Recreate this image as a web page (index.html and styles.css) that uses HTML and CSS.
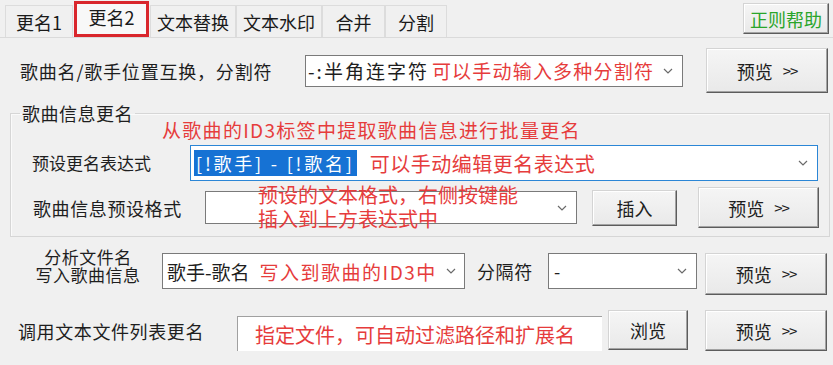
FILE: index.html
```html
<!DOCTYPE html>
<html lang="zh-CN">
<head>
<meta charset="utf-8">
<title>更名2</title>
<link rel="stylesheet" href="styles.css">
</head>
<body>
<div class="tabs">
  <div class="tab t1">更名1</div>
  <div class="tab t2 active">更名2</div>
  <div class="tab t3">文本替换</div>
  <div class="tab t4">文本水印</div>
  <div class="tab t5">合并</div>
  <div class="tab t6">分割</div>
  <div class="btn help-btn">正则帮助</div>
</div>

<div class="row r1">
  <div class="label l1">歌曲名/歌手位置互换，分割符</div>
  <div class="combo c1">
    <span class="val v1">-:半角连字符</span><span class="note n1">可以手动输入多种分割符</span>
    <span class="arrow"><svg width="10" height="6" viewBox="0 0 10 6"><polyline points="1,1 5,5 9,1" fill="none" stroke="#6a6a6a" stroke-width="1.2"/></svg></span>
  </div>
  <div class="btn preview">预览<span class="gt">&gt;&gt;</span></div>
</div>

<fieldset class="group">
  <legend>歌曲信息更名</legend>
  <div class="note group-note">从歌曲的ID3标签中提取歌曲信息进行批量更名</div>
  <div class="row r2">
    <div class="label l2">预设更名表达式</div>
    <div class="combo c2">
      <span class="sel">[!歌手] - [!歌名]</span><span class="note n2">可以手动编辑更名表达式</span>
      <span class="arrow"><svg width="10" height="6" viewBox="0 0 10 6"><polyline points="1,1 5,5 9,1" fill="none" stroke="#6a6a6a" stroke-width="1.2"/></svg></span>
    </div>
  </div>
  <div class="row r3">
    <div class="label l3">歌曲信息预设格式</div>
    <div class="combo c3">
      <span class="arrow"><svg width="10" height="6" viewBox="0 0 10 6"><polyline points="1,1 5,5 9,1" fill="none" stroke="#6a6a6a" stroke-width="1.2"/></svg></span>
      <div class="note overlay-note">预设的文本格式，右侧按键能<br>插入到上方表达式中</div>
    </div>
    <div class="btn insert">插入</div>
    <div class="btn preview p3">预览<span class="gt">&gt;&gt;</span></div>
  </div>
</fieldset>

<div class="row r4">
  <div class="label l4">分析文件名<br>写入歌曲信息</div>
  <div class="combo c4">
    <span class="val v4">歌手-歌名</span><span class="note n4">写入到歌曲的ID3中</span>
    <span class="arrow"><svg width="10" height="6" viewBox="0 0 10 6"><polyline points="1,1 5,5 9,1" fill="none" stroke="#6a6a6a" stroke-width="1.2"/></svg></span>
  </div>
  <div class="label l4b">分隔符</div>
  <div class="combo c5">
    <span class="val v5">-</span>
    <span class="arrow"><svg width="10" height="6" viewBox="0 0 10 6"><polyline points="1,1 5,5 9,1" fill="none" stroke="#6a6a6a" stroke-width="1.2"/></svg></span>
  </div>
  <div class="btn preview p4">预览<span class="gt">&gt;&gt;</span></div>
</div>

<div class="row r5">
  <div class="label l5">调用文本文件列表更名</div>
  <div class="field"><span class="note n5">指定文件，可自动过滤路径和扩展名</span></div>
  <div class="btn browse">浏览</div>
  <div class="btn preview p5">预览<span class="gt">&gt;&gt;</span></div>
</div>
</body>
</html>
```
FILE: styles.css
```css
html, body {
  margin: 0;
  padding: 0;
}
body {
  width: 833px;
  height: 365px;
  overflow: hidden;
  background: #f0f0f0;
  font-family: "Noto Sans CJK SC", "Noto Sans", sans-serif;
  font-size: 18px;
  color: #1e1e1e;
}

/* Tabs */
.tabs {
  display: flex;
  align-items: flex-end;
  height: 37px;
  padding-left: 5px;
  border-bottom: 1px solid #dadada;
}
.tab {
  box-sizing: border-box;
  height: 32px;
  display: flex;
  align-items: center;
  justify-content: center;
  border: 1px solid #dcdcdc;
  border-bottom: none;
  background: #f0f0f0;
  font-size: 18px;
  line-height: 20px;
  color: #1a1a1a;
}
.t1 { width: 68px; }
.t2 { width: 75px; margin-left: 1px; }
.t3 { width: 86px; margin-left: 1px; }
.t4 { width: 86px; }
.t5 { width: 63px; }
.t6 { width: 62px; }
.tab.active {
  height: 36px;
  border: 3px solid #d9262c;
  background: #f8f8f8;
  padding-bottom: 4px;
}

.help-btn {
  margin-left: auto;
  margin-right: 4px;
  align-self: flex-start;
  margin-top: 3px;
  width: 86px;
  height: 31px;
  color: #2aa52a;
  font-size: 17px;
}

/* Generic */
.row {
  display: flex;
  align-items: center;
}
.label {
  line-height: 22px;
  white-space: nowrap;
  letter-spacing: 0.6px;
}
.note {
  color: #e63c3c;
  white-space: nowrap;
}
.combo {
  box-sizing: border-box;
  position: relative;
  display: flex;
  align-items: center;
  background: #fff;
  border: 1px solid #7a7a7a;
  padding-left: 2px;
  white-space: nowrap;
}
.arrow {
  margin-left: auto;
  width: 28px;
  flex: none;
  display: flex;
  align-items: center;
  justify-content: center;
}
.btn {
  box-sizing: border-box;
  display: flex;
  align-items: center;
  justify-content: center;
  background: linear-gradient(#f5f5f5, #e9e9e9);
  border: 1px solid;
  border-color: #d4d4d4 #5c5c5c #5c5c5c #d4d4d4;
  box-shadow: inset -1px -1px 0 #a3a3a3, inset 1px 1px 0 #ffffff;
  font-size: 18px;
  line-height: 20px;
  white-space: nowrap;
}
.gt {
  font-size: 15px;
  margin-left: 10px;
  letter-spacing: -1px;
}

/* Row 1 */
.r1 {
  margin-top: 10px;
  height: 45px;
}
.l1 {
  margin-left: 20px;
  width: 285px;
  letter-spacing: 0.8px;
}
.c1 {
  width: 378px;
  height: 32px;
}
.v1 {
  font-size: 19px;
  letter-spacing: 2px;
}
.n1 {
  margin-left: 3px;
  font-size: 19px;
  letter-spacing: 1.2px;
}
.r1 .preview {
  margin-left: 23px;
  width: 122px;
  height: 45px;
}

/* Group box */
.group {
  margin: 10px 3px 0 10px;
  padding: 0 0 8px 0;
  border: 1px solid #d6d6d6;
  box-shadow: inset 1px 1px 0 #fafafa;
  min-width: 0;
}
.group legend {
  margin-left: 9px;
  padding: 0 2px;
  line-height: 20px;
  font-size: 18px;
  letter-spacing: 0.5px;
}
.group-note {
  margin: -3px 0 0 151px;
  line-height: 20px;
  font-size: 19px;
  letter-spacing: 1.3px;
}

.r2 {
  margin-top: 5px;
  height: 36px;
}
.l2 {
  margin-left: 21px;
  width: 158px;
  font-size: 17px;
  letter-spacing: 0;
}
.c2 {
  width: 628px;
  height: 36px;
  border-color: #2b86d6;
}
.sel {
  margin-left: 1px;
  background: #1672d4;
  color: #fff;
  line-height: 26px;
  padding: 0 2px;
  letter-spacing: 2.8px;
}
.n2 {
  margin-left: 13px;
  font-size: 20px;
  letter-spacing: 0.5px;
}

.r3 {
  margin-top: 6px;
  height: 41px;
}
.l3 {
  margin-left: 22px;
  width: 172px;
}
.c3 {
  width: 372px;
  height: 33px;
}
.overlay-note {
  position: absolute;
  left: 52px;
  top: -9px;
  font-size: 20px;
  line-height: 24px;
}
.insert {
  margin-left: 15px;
  width: 85px;
  height: 36px;
}
.p3 {
  margin-left: 21px;
  width: 121px;
  height: 41px;
}

/* Row 4 */
.r4 {
  margin-top: 15px;
  height: 43px;
  align-items: flex-start;
}
.l4 {
  margin-left: 33px;
  margin-top: -4px;
  width: 110px;
  text-align: center;
  font-size: 17px;
  line-height: 18px;
  letter-spacing: 0.5px;
}
.c4 {
  margin-left: 19px;
  margin-top: 1px;
  width: 303px;
  height: 36px;
}
.v4 {
  font-size: 19px;
  margin-left: 2px;
}
.n4 {
  margin-left: 10px;
  font-size: 19px;
  letter-spacing: 1.5px;
}
.l4b {
  margin-left: 12px;
  margin-top: 1px;
  width: 71px;
  line-height: 36px;
}
.c5 {
  margin-top: 1px;
  width: 149px;
  height: 36px;
}
.v5 {
  margin-left: 3px;
}
.p4 {
  margin-left: 8px;
  margin-top: 1px;
  width: 122px;
  height: 42px;
}

/* Row 5 */
.r5 {
  margin-top: 15px;
  height: 41px;
}
.l5 {
  margin-left: 18px;
  width: 219px;
}
.field {
  box-sizing: border-box;
  align-self: flex-end;
  width: 365px;
  height: 35px;
  background: #fff;
  border-top: 1px solid #a0a0a0;
  border-left: 1px solid #a0a0a0;
  padding-left: 17px;
  display: flex;
  align-items: center;
}
.n5 {
  font-size: 20px;
}
.browse {
  align-self: flex-start;
  margin-left: 6px;
  width: 80px;
  height: 40px;
}
.p5 {
  margin-left: 17px;
  width: 122px;
  height: 41px;
}
```
